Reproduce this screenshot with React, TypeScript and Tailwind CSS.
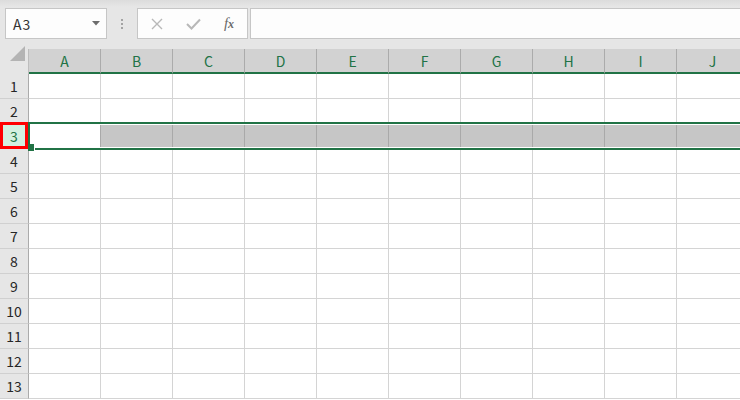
import React from "react";

const COLS = ["A", "B", "C", "D", "E", "F", "G", "H", "I", "J"];
const ROWS = Array.from({ length: 13 }, (_, i) => i + 1);
const FONT = { fontFamily: '"Noto Sans CJK JP", "Open Sans", sans-serif' };

export default function App() {
  return (
    <div
      className="relative w-[740px] h-[400px] overflow-hidden bg-white text-[14px]"
      style={FONT}
    >
      {/* Formula toolbar */}
      <div className="h-[49px] bg-[linear-gradient(#dcdcdc,#e6e6e6_7px)] flex items-start pt-[8px]">
        <div className="ml-[5px] w-[102px] h-[31px] border border-[#c6c6c6] bg-[#fdfdfd] flex items-center pl-[7px] pr-[6px] shrink-0">
          <span className="text-[#333] text-[14px] leading-none tracking-[1px]">A3</span>
          <svg className="ml-auto" width="8" height="5" viewBox="0 0 8 5">
            <path d="M0 0 H8 L4 4.5 Z" fill="#6d6d6d" />
          </svg>
        </div>
        <div className="w-[30px] h-[31px] flex flex-col items-center justify-center gap-[2px] shrink-0">
          <div className="w-[2px] h-[2px] bg-[#a3a3a3]" />
          <div className="w-[2px] h-[2px] bg-[#a3a3a3]" />
          <div className="w-[2px] h-[2px] bg-[#a3a3a3]" />
        </div>
        <div className="w-[111px] h-[31px] border border-[#c6c6c6] bg-[#fdfdfd] flex items-center shrink-0">
          <div className="w-[36px] flex justify-center ml-[1px]">
            <svg width="12" height="12" viewBox="0 0 12 12">
              <path d="M1 1 L11 11 M11 1 L1 11" stroke="#b8b8b8" strokeWidth="1.4" />
            </svg>
          </div>
          <div className="w-[36px] flex justify-center">
            <svg width="15" height="12" viewBox="0 0 15 12">
              <path d="M1 6 L5.5 10.5 L14 1.5" stroke="#b8b8b8" strokeWidth="2" fill="none" />
            </svg>
          </div>
          <div className="w-[36px] flex justify-center">
            <span
              className="italic text-[#6a6a6a] leading-none"
              style={{ fontFamily: '"Liberation Serif", serif' }}
            >
              <span className="text-[15px]">f</span>
              <span className="text-[12px] font-bold">x</span>
            </span>
          </div>
        </div>
        <div className="ml-[2px] w-[520px] h-[31px] border border-[#c6c6c6] bg-[#fdfdfd] shrink-0" />
      </div>

      {/* Column headers */}
      <div className="flex h-[25px]">
        <div className="w-[29px] h-[25px] bg-[#e6e6e6] border-r border-[#bdbdbd] relative shrink-0">
          <svg className="absolute left-[8px] top-[-3px]" width="18" height="17" viewBox="0 0 18 17">
            <path d="M17 0 V15 H2 Z" fill="#b4b4b4" />
          </svg>
        </div>
        {COLS.map((c) => (
          <div
            key={c}
            className="w-[72px] h-[25px] bg-[#d2d2d2] border-r border-[#ababab] border-b-2 border-b-[#217346] flex items-center justify-center text-[#217346] shrink-0"
          >
            <span className="leading-none">{c}</span>
          </div>
        ))}
      </div>

      {/* Body */}
      <div className="relative">
        {ROWS.map((r) => (
          <div key={r} className="flex h-[25px]">
            <div className="w-[29px] h-[25px] bg-[#e6e6e6] border-r border-[#ababab] border-b border-b-[#d0d0d0] flex items-center justify-center shrink-0">
              <span className={`leading-none ${r === 3 ? "text-[#217346]" : "text-[#262626]"}`}>{r}</span>
            </div>
            {r === 3 ? (
              <>
                <div className="w-[71px] h-[25px] bg-white shrink-0" />
                {COLS.slice(1).map((c) => (
                  <div key={c} className="w-[72px] h-[25px] pt-[1px] shrink-0">
                    <div className="h-[22px] bg-[#c6c6c6] border-l border-[#a9a9a9]" />
                  </div>
                ))}
              </>
            ) : (
              COLS.map((c) => (
                <div key={c} className="w-[72px] h-[25px] border-r border-b border-[#d4d4d4] shrink-0" />
              ))
            )}
          </div>
        ))}

        {/* Row selection border */}
        <div className="absolute left-[28px] top-[48px] right-0 h-[28px] border-t-2 border-b-2 border-l-2 border-[#217346]" />
        {/* Fill handle */}
        <div className="absolute left-[28px] top-[70px] w-[7px] h-[7px] bg-[#217346] border-r border-white" />
        {/* Row header highlight */}
        <div className="absolute left-0 top-[48px] w-[28px] h-[27px] border-[3px] border-[#ff0000] bg-[#d3f0e0] flex items-center justify-center">
          <span className="leading-none text-[#217346]">3</span>
        </div>
      </div>
    </div>
  );
}
